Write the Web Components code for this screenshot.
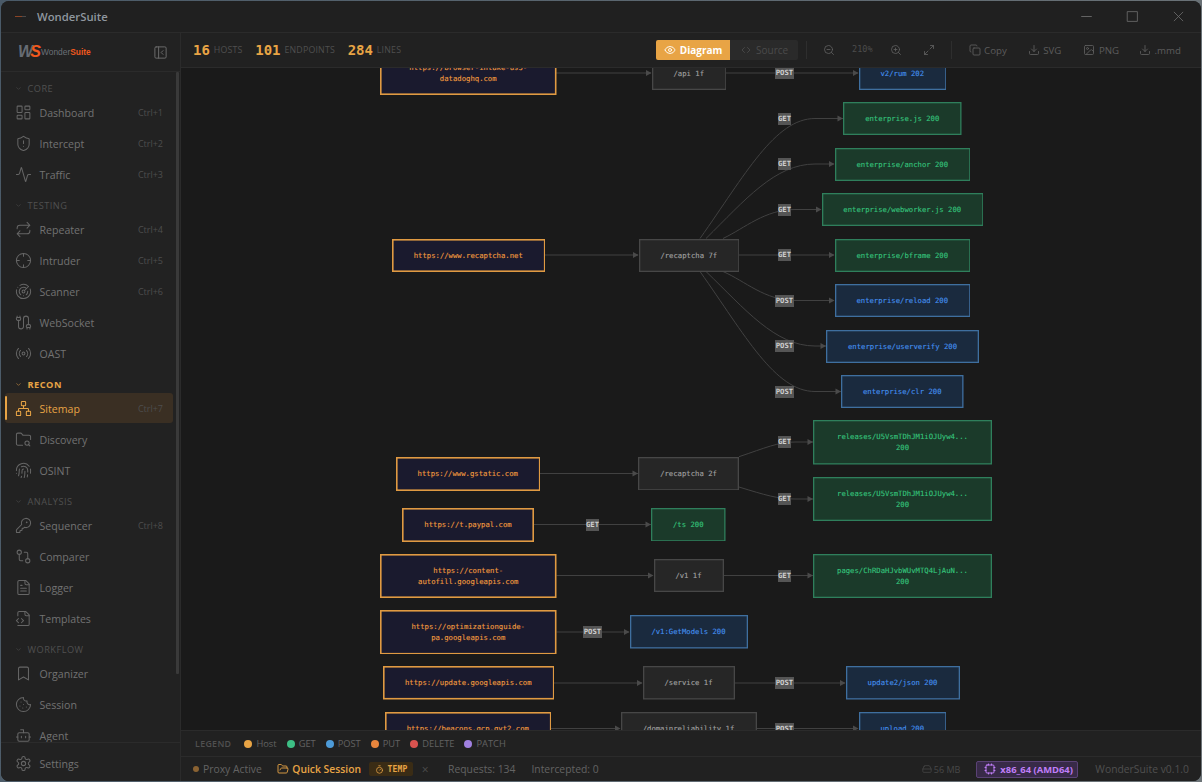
<!DOCTYPE html>
<html lang="en"><head><meta charset="utf-8"><title>WonderSuite</title>
<style>
html,body{margin:0;height:100%;overflow:hidden}
body{background:linear-gradient(100deg,#4a5a68,#6d7478);font-family:"Open Sans","Noto Sans",sans-serif;padding:1px 1px 1px 1px;box-sizing:border-box;height:782px;width:1202px}
</style></head><body>
<ws-app></ws-app>
<script>
const ICONS={
dashboard:'<rect x="3" y="3" width="7" height="9" rx="1"/><rect x="14" y="3" width="7" height="5" rx="1"/><rect x="14" y="12" width="7" height="9" rx="1"/><rect x="3" y="16" width="7" height="5" rx="1"/>',
shield:'<path d="M20 13c0 5-3.5 7.5-7.66 8.95a1 1 0 0 1-.67-.01C7.5 20.5 4 18 4 13V6a1 1 0 0 1 1-1c2 0 4.5-1.2 6.24-2.72a1.17 1.17 0 0 1 1.52 0C14.51 3.81 17 5 19 5a1 1 0 0 1 1 1z"/><path d="M12 8v4M12 16h.01"/>',
activity:'<path d="M22 12h-2.48a2 2 0 0 0-1.93 1.46l-2.35 8.36a.25.25 0 0 1-.48 0L9.24 2.18a.25.25 0 0 0-.48 0l-2.35 8.36A2 2 0 0 1 4.49 12H2"/>',
repeat:'<path d="m17 2 4 4-4 4M3 11v-1a4 4 0 0 1 4-4h14M7 22l-4-4 4-4M21 13v1a4 4 0 0 1-4 4H3"/>',
crosshair:'<circle cx="12" cy="12" r="10"/><path d="M22 12h-4M6 12H2M12 6V2M12 22v-4"/>',
radar:'<path d="M19.07 4.93A10 10 0 0 0 6.99 3.34M4 6h.01M2.29 9.62A10 10 0 1 0 21.31 8.35M16.24 7.76A6 6 0 1 0 8.23 16.67M12 18h.01M17.99 11.66A6 6 0 0 1 15.77 16.67"/><circle cx="12" cy="12" r="2"/><path d="m13.41 10.59 5.66-5.66"/>',
cable:'<path d="M17 21v-2a1 1 0 0 1-1-1v-1a2 2 0 0 1 2-2h2a2 2 0 0 1 2 2v1a1 1 0 0 1-1 1M19 15V6.5a1 1 0 0 0-7 0v11a1 1 0 0 1-7 0V9M21 21v-2h-4M3 5h4V3M7 5a1 1 0 0 1 1 1v1a2 2 0 0 1-2 2H4a2 2 0 0 1-2-2V6a1 1 0 0 1 1-1V3"/>',
radio:'<path d="M4.9 19.1C1 15.2 1 8.8 4.9 4.9M7.8 16.2c-2.3-2.3-2.3-6.1 0-8.5M16.2 7.8c2.3 2.3 2.3 6.1 0 8.5M19.1 4.9C23 8.8 23 15.1 19.1 19"/><circle cx="12" cy="12" r="2"/>',
network:'<rect x="16" y="16" width="6" height="6" rx="1"/><rect x="2" y="16" width="6" height="6" rx="1"/><rect x="9" y="2" width="6" height="6" rx="1"/><path d="M5 16v-3a1 1 0 0 1 1-1h12a1 1 0 0 1 1 1v3M12 12V8"/>',
foldersearch:'<path d="M10.7 20H4a2 2 0 0 1-2-2V5a2 2 0 0 1 2-2h3.9a2 2 0 0 1 1.69.9l.81 1.2a2 2 0 0 0 1.67.9H20a2 2 0 0 1 2 2v4.1M21 21l-1.9-1.9"/><circle cx="17" cy="17" r="3"/>',
fingerprint:'<path d="M12 10a2 2 0 0 0-2 2c0 1.02-.1 2.51-.26 4M14 13.12c0 2.38 0 6.38-1 8.88M17.29 21.02c.12-.6.43-2.3.5-3.02M2 12a10 10 0 0 1 18-6M2 16h.01M21.8 16c.2-2 .131-5.354 0-6M5 19.5C5.5 18 6 15 6 12a6 6 0 0 1 .34-2M8.65 22c.21-.66.45-1.32.57-2M9 6.8a6 6 0 0 1 9 5.2v2"/>',
key:'<path d="M2.586 17.414A2 2 0 0 0 2 18.828V21a1 1 0 0 0 1 1h3a1 1 0 0 0 1-1v-1a1 1 0 0 1 1-1h1a1 1 0 0 0 1-1v-1a1 1 0 0 1 1-1h.172a2 2 0 0 0 1.414-.586l.814-.814a6.5 6.5 0 1 0-4-4z"/><circle cx="16.5" cy="7.5" r=".5"/>',
compare:'<circle cx="18" cy="18" r="3"/><circle cx="6" cy="6" r="3"/><path d="M13 6h3a2 2 0 0 1 2 2v7M11 18H8a2 2 0 0 1-2-2V9"/>',
filetext:'<path d="M15 2H6a2 2 0 0 0-2 2v16a2 2 0 0 0 2 2h12a2 2 0 0 0 2-2V7Z"/><path d="M14 2v4a2 2 0 0 0 2 2h4M10 9H8M16 13H8M16 17H8"/>',
filecode:'<path d="M4 22h14a2 2 0 0 0 2-2V7l-5-5H6a2 2 0 0 0-2 2v4"/><path d="M14 2v4a2 2 0 0 0 2 2h4M5 12l-3 3 3 3M9 18l3-3-3-3"/>',
bookmark:'<path d="m19 21-7-4-7 4V5a2 2 0 0 1 2-2h10a2 2 0 0 1 2 2v16z"/>',
cookie:'<path d="M12 2a10 10 0 1 0 10 10 4 4 0 0 1-5-5 4 4 0 0 1-5-5M8.5 8.5v.01M16 15.5v.01M12 12v.01M11 17v.01M7 14v.01"/>',
bot:'<path d="M12 8V4H8"/><rect x="4" y="8" width="16" height="12" rx="2"/><path d="M2 14h2M20 14h2M15 13v2M9 13v2"/>',
settings:'<path d="M12.22 2h-.44a2 2 0 0 0-2 2v.18a2 2 0 0 1-1 1.73l-.43.25a2 2 0 0 1-2 0l-.15-.08a2 2 0 0 0-2.73.73l-.22.38a2 2 0 0 0 .73 2.73l.15.1a2 2 0 0 1 1 1.72v.51a2 2 0 0 1-1 1.74l-.15.09a2 2 0 0 0-.73 2.73l.22.38a2 2 0 0 0 2.73.73l.15-.08a2 2 0 0 1 2 0l.43.25a2 2 0 0 1 1 1.73V20a2 2 0 0 0 2 2h.44a2 2 0 0 0 2-2v-.18a2 2 0 0 1 1-1.73l.43-.25a2 2 0 0 1 2 0l.15.08a2 2 0 0 0 2.73-.73l.22-.39a2 2 0 0 0-.73-2.73l-.15-.08a2 2 0 0 1-1-1.74v-.5a2 2 0 0 1 1-1.74l.15-.09a2 2 0 0 0 .73-2.73l-.22-.38a2 2 0 0 0-2.73-.73l-.15.08a2 2 0 0 1-2 0l-.43-.25a2 2 0 0 1-1-1.73V4a2 2 0 0 0-2-2z"/><circle cx="12" cy="12" r="3"/>',
panel:'<rect x="3" y="3" width="18" height="18" rx="2"/><path d="M9 3v18M16 15l-3-3 3-3"/>',
eye:'<path d="M2.062 12.348a1 1 0 0 1 0-.696 10.75 10.75 0 0 1 19.876 0 1 1 0 0 1 0 .696 10.75 10.75 0 0 1-19.876 0"/><circle cx="12" cy="12" r="3"/>',
code:'<path d="m9 7-5 5 5 5M15 7l5 5-5 5"/>',
zoomout:'<circle cx="11" cy="11" r="8"/><path d="m21 21-4.3-4.3M8 11h6"/>',
zoomin:'<circle cx="11" cy="11" r="8"/><path d="m21 21-4.3-4.3M8 11h6M11 8v6"/>',
expand:'<path d="M15 3h6v6M9 21H3v-6M21 3l-7 7M3 21l7-7"/>',
copy:'<rect x="8" y="8" width="14" height="14" rx="2"/><path d="M4 16c-1.1 0-2-.9-2-2V4c0-1.1.9-2 2-2h10c1.1 0 2 .9 2 2"/>',
download:'<path d="M21 15v4a2 2 0 0 1-2 2H5a2 2 0 0 1-2-2v-4M7 10l5 5 5-5M12 15V3"/>',
image:'<rect x="3" y="3" width="18" height="18" rx="2"/><circle cx="9" cy="9" r="2"/><path d="m21 15-3.086-3.086a2 2 0 0 0-2.828 0L6 21"/>',
folderopen:'<path d="m6 14 1.5-2.9A2 2 0 0 1 9.24 10H20a2 2 0 0 1 1.94 2.5l-1.54 6a2 2 0 0 1-1.95 1.5H4a2 2 0 0 1-2-2V5a2 2 0 0 1 2-2h3.9a2 2 0 0 1 1.69.9l.81 1.2a2 2 0 0 0 1.67.9H18a2 2 0 0 1 2 2v2"/>',
timer:'<path d="M10 2h4M12 14l3-3"/><circle cx="12" cy="14" r="8"/>',
drive:'<path d="M22 12H2M5.45 5.11 2 12v6a2 2 0 0 0 2 2h16a2 2 0 0 0 2-2v-6l-3.45-6.89A2 2 0 0 0 16.76 4H7.24a2 2 0 0 0-1.79 1.11z"/>',
cpu:'<rect x="4" y="4" width="16" height="16" rx="2"/><path d="M15 2v2M15 20v2M2 15h2M2 9h2M20 15h2M20 9h2M9 2v2M9 20v2"/>',
chev:'<path d="m6 9 6 6 6-6"/>',
minus:'<path d="M3 12h18"/>',square:'<rect x="3" y="3" width="18" height="18"/>',x:'<path d="M4 4l16 16M20 4 4 20"/>'
};
class WsIcon extends HTMLElement{connectedCallback(){
  const s=this.getAttribute('size')||16,w=this.getAttribute('sw')||1.6;
  this.attachShadow({mode:'open'}).innerHTML=`<style>:host{display:inline-flex;flex:none;width:${s}px;height:${s}px}svg{display:block;width:100%;height:100%;fill:none;stroke:currentColor;stroke-width:${w};stroke-linecap:round;stroke-linejoin:round}</style><svg viewBox="0 0 24 24">${ICONS[this.getAttribute('name')]}</svg>`;
}}
customElements.define('ws-icon',WsIcon);

class WsApp extends HTMLElement{connectedCallback(){
  this.attachShadow({mode:'open'}).innerHTML=`<style>
  :host{display:flex;flex-direction:column;width:1200px;height:780px;border-radius:8px;overflow:hidden;background:#212121}
  .row{flex:1;display:flex;min-height:0}
  .main{flex:1;display:flex;flex-direction:column;min-width:0}
  </style><ws-titlebar></ws-titlebar><div class="row"><ws-sidebar></ws-sidebar><div class="main"><ws-toolbar></ws-toolbar><ws-diagram></ws-diagram><ws-legend></ws-legend><ws-statusbar></ws-statusbar></div></div>`;
}}
class WsTitlebar extends HTMLElement{connectedCallback(){
  this.attachShadow({mode:'open'}).innerHTML=`<style>
  :host{display:flex;align-items:center;height:32px;flex:none;box-sizing:border-box;border-bottom:1px solid #2b2b2b;background:#202020;color:#8f979f;font:600 11.3px "Open Sans",sans-serif}
  .mark{width:11px;height:1.5px;margin-left:14px;background:linear-gradient(90deg,#8a4426 0 60%,#4a4a4a 60%)}
  .t{margin-left:11px}
  .c{margin-left:auto;display:flex;color:#6e6e6e}
  .c span{display:flex;width:46px;justify-content:center}
  </style><div class="mark"></div><div class="t">WonderSuite</div><div class="c"><span><ws-icon name="minus" size="13" sw="1.6"></ws-icon></span><span><ws-icon name="square" size="13" sw="1.5"></ws-icon></span><span><ws-icon name="x" size="13" sw="1.5"></ws-icon></span></div>`;
}}
class WsNavSection extends HTMLElement{connectedCallback(){
  const a=this.hasAttribute('active');
  this.attachShadow({mode:'open'}).innerHTML=`<style>
  :host{display:flex;align-items:center;height:24px;padding:6px 0 0 14px;box-sizing:border-box;color:${a?'#e8a445':'#505050'};font:${a?700:400} 9.2px "Open Sans",sans-serif;letter-spacing:.5px}
  ws-icon{margin-right:5.5px;color:${a?'#a5763a':'#444'}}
  </style><ws-icon name="chev" size="7" sw="2.6"></ws-icon><slot></slot>`;
}}
class WsNavItem extends HTMLElement{connectedCallback(){
  const a=this.hasAttribute('active'),k=this.getAttribute('keys')||'';
  this.attachShadow({mode:'open'}).innerHTML=`<style>
  :host{display:flex;align-items:center;height:30px;margin:0 7px 1px 4px;padding:0 10px 0 9.5px;box-sizing:border-box;border-radius:3px;position:relative;color:${a?'#e8a445':'#727272'};font:10.6px "Open Sans",sans-serif;${a?'background:#3a2f23;':''}}
  ws-icon{margin-right:8px;color:${a?'#e8a445':'#666'}}
  .t{padding-top:2px}
  .k{margin-left:auto;font-size:9px;color:#4d4d4d;padding-top:1px}
  ${a?':host::before{content:"";position:absolute;left:0;top:3px;bottom:3px;width:2px;background:#e8a445;border-radius:1px}':''}
  </style><ws-icon name="${this.getAttribute('icon')}" size="17" sw="1.45"></ws-icon><span class="t"><slot></slot></span>${k?`<span class="k">${k}</span>`:''}`;
}}
class WsSidebar extends HTMLElement{connectedCallback(){
  const sec=(n,a)=>`<ws-nav-section ${a?'active':''}>${n}</ws-nav-section>`;
  const it=(n,i,k,a)=>`<ws-nav-item icon="${i}" keys="${k||''}" ${a?'active':''}>${n}</ws-nav-item>`;
  this.attachShadow({mode:'open'}).innerHTML=`<style>
  :host{display:flex;flex-direction:column;flex:none;width:180px;box-sizing:border-box;background:#222;border-right:1px solid #2b2b2b;position:relative}
  .logo{flex:none;height:39px;display:flex;align-items:center;box-sizing:border-box;border-bottom:1px solid #2b2b2b;padding:0 12px 0 17px;color:#666}
  .ws{font:italic 900 16px/1 "Liberation Sans",sans-serif;letter-spacing:-2.8px;color:#666c74;width:23px}
  .ws b{color:#f0581e}
  .name{font:400 8.4px "Liberation Sans",sans-serif;color:#6a7078}
  .name b{color:#f0581e;font-weight:700}
  .logo ws-icon{margin-left:auto;color:#6a6a6a}
  nav{flex:1;min-height:0;overflow:hidden;padding-top:1px}
  .thumb{position:absolute;right:1px;top:39px;width:3px;height:602px;background:#3a3a3a;border-radius:1px}
  .foot{flex:none;height:39px;border-top:1px solid #2b2b2b;display:flex;align-items:flex-start;box-sizing:border-box;padding-top:5px;background:#222}
  .foot ws-nav-item{flex:1}
  </style><div class="logo"><span class="ws">W<b>S</b></span><span class="name">Wonder<b>Suite</b></span><ws-icon name="panel" size="15" sw="1.6"></ws-icon></div>
  <nav>${sec('CORE')}${it('Dashboard','dashboard','Ctrl+1')}${it('Intercept','shield','Ctrl+2')}${it('Traffic','activity','Ctrl+3')}
  ${sec('TESTING')}${it('Repeater','repeat','Ctrl+4')}${it('Intruder','crosshair','Ctrl+5')}${it('Scanner','radar','Ctrl+6')}${it('WebSocket','cable')}${it('OAST','radio')}
  ${sec('RECON',1)}${it('Sitemap','network','Ctrl+7',1)}${it('Discovery','foldersearch')}${it('OSINT','fingerprint')}
  ${sec('ANALYSIS')}${it('Sequencer','key','Ctrl+8')}${it('Comparer','compare')}${it('Logger','filetext')}${it('Templates','filecode')}
  ${sec('WORKFLOW')}${it('Organizer','bookmark')}${it('Session','cookie')}${it('Agent','bot')}</nav>
  <div class="thumb"></div><div class="foot">${it('Settings','settings')}</div>`;
}}
class WsTool extends HTMLElement{connectedCallback(){
  this.attachShadow({mode:'open'}).innerHTML=`<style>
  :host{display:inline-flex;align-items:center;gap:3.5px;color:#5c5c5c;font:9.7px "Open Sans",sans-serif}
  ws-icon{color:#5f5f5f}
  </style><ws-icon name="${this.getAttribute('icon')}" size="${this.getAttribute('size')||12}" sw="1.7"></ws-icon><slot></slot>`;
}}
class WsToolbar extends HTMLElement{connectedCallback(){
  const st=(n,l)=>`<span class="st"><b>${n}</b><i>${l}</i></span>`;
  this.attachShadow({mode:'open'}).innerHTML=`<style>
  :host{display:flex;align-items:center;flex:none;height:35px;box-sizing:border-box;border-bottom:1px solid #2b2b2b;background:#212121;padding:0 0 0 12px;font-family:"Open Sans",sans-serif}
  .st{display:flex;align-items:center;margin-right:12.7px}
  .st b{font:700 14px "DejaVu Sans Mono",monospace;color:#e8a445;letter-spacing:-.05px}
  .st i{font:normal 8.8px "Open Sans",sans-serif;color:#4f4f4f;margin-left:4px;letter-spacing:.2px}
  .seg{margin-left:auto;display:flex;height:20px;border-radius:2px;overflow:hidden;background:#2a2a2a}
  .seg span{display:flex;align-items:center;justify-content:center;gap:4px;font-size:10px}
  .on{width:74px;background:#e8a445;color:#fff;font-weight:700}
  .off{width:68px;color:#4a4a4a}
  .div{width:1px;height:18px;background:#2e2e2e}
  .z{font:8.5px "DejaVu Sans Mono",monospace;color:#4c4c4c;margin:0 0 2px 0}
  .tools{display:flex;align-items:center}
  </style>${st(16,'HOSTS')}${st(101,'ENDPOINTS')}${st(284,'LINES')}
  <div class="seg"><span class="on"><ws-icon name="eye" size="12" sw="1.8"></ws-icon>Diagram</span><span class="off"><ws-icon name="code" size="12" sw="1.8"></ws-icon>Source</span></div>
  <div class="tools">
  <div class="div" style="margin-left:8px"></div>
  <ws-tool icon="zoomout" size="12" style="margin-left:16px"></ws-tool>
  <span class="z" style="margin-left:17px">210%</span>
  <ws-tool icon="zoomin" size="12" style="margin-left:17px"></ws-tool>
  <ws-tool icon="expand" size="12" style="margin-left:21px"></ws-tool>
  <div class="div" style="margin-left:16px"></div>
  <ws-tool icon="copy" style="margin-left:17px">Copy</ws-tool>
  <ws-tool icon="download" style="margin-left:21px">SVG</ws-tool>
  <ws-tool icon="image" style="margin-left:22px">PNG</ws-tool>
  <ws-tool icon="download" style="margin-left:20px;margin-right:20px">.mmd</ws-tool>
  </div>`;
}}
class WsNode extends HTMLElement{connectedCallback(){
  const [x,y,w,h]=['x','y','w','h'].map(a=>+this.getAttribute(a)),k=this.getAttribute('kind');
  const C={host:['#1a1a2e','#e09a42','#f09a3e',1.6],dir:['#262626','#474747','#a0a0a0',1.3],get:['#1b3a2a','#2f7f5c','#35c47c',1.3],post:['#1a2a3e','#3f6f9f','#4490ee',1.3]}[k];
  this.attachShadow({mode:'open'}).innerHTML=`<style>
  :host{position:absolute;left:${x-181}px;top:${y-68}px;width:${w}px;height:${h}px;display:flex;align-items:center;justify-content:center;text-align:center;color:${C[2]};font:7.25px/11px "DejaVu Sans Mono",monospace;-webkit-text-stroke:.12px currentColor}
  svg{position:absolute;inset:0;width:100%;height:100%}
  rect{fill:${C[0]};stroke:${C[1]};stroke-width:${C[3]}}
  div{position:relative}
  </style><svg><rect x="${C[3]/2}" y="${C[3]/2}" width="${w-C[3]}" height="${h-C[3]}"/></svg><div><slot></slot></div>`;
}}
class WsEdgeLabel extends HTMLElement{connectedCallback(){
  const cx=+this.getAttribute('cx'),cy=+this.getAttribute('cy'),n=this.textContent.length,w=n*4.36+.8;
  this.attachShadow({mode:'open'}).innerHTML=`<style>
  :host{position:absolute;left:${cx-181-w/2}px;top:${cy-68-6}px;width:${w}px;height:12px;background:#555;color:#cfcfcf;font:700 7.25px/12px "DejaVu Sans Mono",monospace;text-align:center}
  </style><slot></slot>`;
}}
class WsDiagram extends HTMLElement{connectedCallback(){
  const N=[
  ['host',380,51,176.5,44,'https://browser-intake-us5-<br>datadoghq.com'],['dir',651.5,57,74.5,33,'/api 1f'],['post',858.5,57,87.5,33,'v2/rum 202'],
  ['host',391.5,238.5,153.5,33,'https://www.recaptcha.net'],['dir',638.5,238.5,100.5,33,'/recaptcha 7f'],
  ['get',843,102,118.5,33,'enterprise.js 200'],['get',834.5,147.5,135.5,33,'enterprise/anchor 200'],['get',821.5,193,161.5,33,'enterprise/webworker.js 200'],['get',834.5,238.5,135.5,33,'enterprise/bframe 200'],
  ['post',834.5,284,135.5,33,'enterprise/reload 200'],['post',826,329.5,153,33,'enterprise/userverify 200'],['post',841,375,122.5,33,'enterprise/clr 200'],
  ['host',395.5,456.5,144.5,34,'https://www.gstatic.com'],['dir',638,456.5,101,33.5,'/recaptcha 2f'],
  ['get',813,420,179,44.5,'releases/U5VsmTDhJM1iOJUyw4...<br>200'],['get',813,477,179,44,'releases/U5VsmTDhJM1iOJUyw4...<br>200'],
  ['host',402,507.5,132,34,'https://t.paypal.com'],['get',651,507.5,74.5,33.5,'/ts 200'],
  ['host',380,553.5,176.5,44,'https://content-<br>autofill.googleapis.com'],['dir',653.5,559,70,33,'/v1 1f'],['get',813,553.5,179,44,'pages/ChRDaHJvbWUvMTQ4LjAuN...<br>200'],
  ['host',380,609.5,176.5,44.5,'https://optimizationguide-<br>pa.googleapis.com'],['post',629.5,615,118,33.5,'/v1:GetModels 200'],
  ['host',382.5,666,171.5,33.5,'https://update.googleapis.com'],['dir',642.5,666,92,33.5,'/service 1f'],['post',845.5,666,114,33.5,'update2/json 200'],
  ['host',384.5,711.5,166.5,33.5,'https://beacons.gcp.gvt2.com'],['dir',620.5,711.5,136,33.5,'/domainreliability 1f'],['post',858.5,711.5,87.5,33.5,'upload 200']
  ];
  const E=[
  ['M556 73H651',651.5,73],['M726 73H858',858.5,73],
  ['M545 255H638',638.5,255],
  ['M700 238.5C745 175 775 118.5 815 118.5H843',843,118.5],['M706 238.5C745 200 775 164 815 164H834',834.5,164],['M723 238.5C745 228 765 209.5 795 209.5H821',821.5,209.5],['M739 255H834',834.5,255],
  ['M723 271.5C745 281 765 300.5 795 300.5H834',834.5,300.5],['M706 271.5C745 309 775 346 815 346H826',826,346],['M700 271.5C745 335 775 391.5 815 391.5H841',841,391.5],
  ['M540 473.5H638',638,473.5],['M739 456.7C765 448 778 442 795 442H813',813,442],['M739 487C765 495 778 499 795 499H813',813,499],
  ['M534 524.5H651',651,524.5],['M556.5 575.5H653',653.5,575.5],['M723.5 575.5H813',813,575.5],
  ['M556.5 632H629',629.5,632],['M554 683H642',642.5,683],['M734.5 683H845',845.5,683],
  ['M551 728.5H620',620.5,728.5],['M756.5 728.5H858',858.5,728.5]
  ];
  const L=[['POST',784.5,73],['GET',784.5,118.5],['GET',784.5,164],['GET',784.5,209.5],['GET',784.5,255],['POST',784.5,300.5],['POST',784.5,346],['POST',784.5,391.5],['GET',784.5,442],['GET',784.5,499],['GET',592.5,524.5],['GET',784.5,575.5],['POST',592.5,632],['POST',784.5,683],['POST',784.5,728.5]];
  const paths=E.map(e=>`<path d="${e[0]}"/><polygon points="${e[1]},${e[2]} ${e[1]-5.5},${e[2]-3} ${e[1]-5.5},${e[2]+3}"/>`).join('');
  this.attachShadow({mode:'open'}).innerHTML=`<style>
  :host{display:block;flex:1;min-height:0;position:relative;overflow:hidden;background:#1a1a1a}
  svg{position:absolute;left:-181px;top:-68px;width:1202px;height:782px}
  path{fill:none;stroke:#414141;stroke-width:1}
  polygon{fill:#4a4a4a}
  </style><svg>${paths}</svg>`+
  N.map(n=>`<ws-node kind="${n[0]}" x="${n[1]}" y="${n[2]}" w="${n[3]}" h="${n[4]}">${n[5]}</ws-node>`).join('')+
  L.map(l=>`<ws-edge-label cx="${l[1]}" cy="${l[2]}">${l[0]}</ws-edge-label>`).join('');
}}
class WsLegend extends HTMLElement{connectedCallback(){
  const d=(c,t)=>`<span class="d"><i style="background:${c}"></i>${t}</span>`;
  this.attachShadow({mode:'open'}).innerHTML=`<style>
  :host{display:flex;align-items:center;flex:none;height:27px;box-sizing:border-box;border-top:1px solid #2b2b2b;border-bottom:1px solid #2b2b2b;background:#212121;padding-left:14px;font:9.3px "Open Sans",sans-serif;color:#616161}
  b{font:600 8.8px "Open Sans",sans-serif;color:#505050;letter-spacing:.35px;margin-right:13px}
  .d{display:flex;align-items:center;margin-right:10px}
  i{width:8px;height:8px;border-radius:50%;margin-right:4px}
  </style><b>LEGEND</b>${d('#e8a445','Host')}${d('#3dbf85','GET')}${d('#4d9bd9','POST')}${d('#e8863d','PUT')}${d('#d9534f','DELETE')}${d('#a080e0','PATCH')}`;
}}
class WsStatusbar extends HTMLElement{connectedCallback(){
  this.attachShadow({mode:'open'}).innerHTML=`<style>
  :host{display:flex;align-items:center;flex:none;height:24px;box-sizing:border-box;background:#212121;padding-left:12px;color:#636363;font:10.35px "Open Sans",sans-serif;white-space:nowrap}
  .dot{width:6px;height:6px;border-radius:50%;background:#8a6232;margin-right:4px}
  .qs{display:flex;align-items:center;gap:3.5px;color:#e8a445;font-weight:600;margin-left:15px}
  .tmp{display:flex;align-items:center;justify-content:center;gap:4px;width:44px;height:14px;background:#3a2c15;border-radius:2px;color:#e8a445;font:700 8px "DejaVu Sans Mono",monospace;margin-left:8px;letter-spacing:.2px}
  .x{margin-left:6px;color:#4e4e4e;font-size:12px;width:12px;text-align:center}
  .mem{display:flex;align-items:center;gap:2px;margin-left:auto;color:#484848;font-size:9px}
  .arch{display:flex;align-items:center;gap:4px;height:17px;width:102px;box-sizing:border-box;padding-left:7px;background:#382a48;border:1px solid #5a4275;border-radius:2px;color:#c07ef8;font:700 9.4px "Open Sans",sans-serif;margin-left:16px}
  .v{margin:0 12px 0 17px;color:#505050}
  </style><span class="dot"></span><span>Proxy Active</span>
  <span class="qs"><ws-icon name="folderopen" size="12" sw="1.8"></ws-icon>Quick Session</span>
  <span class="tmp"><ws-icon name="timer" size="9" sw="2"></ws-icon>TEMP</span><span class="x">×</span>
  <span style="margin-left:17px">Requests: 134</span><span style="margin-left:16px">Intercepted: 0</span>
  <span class="mem"><ws-icon name="drive" size="10" sw="1.8"></ws-icon>56 MB</span>
  <span class="arch"><ws-icon name="cpu" size="12" sw="2"></ws-icon>x86_64 (AMD64)</span>
  <span class="v">WonderSuite v0.1.0</span>`;
}}
customElements.define('ws-titlebar',WsTitlebar);customElements.define('ws-nav-section',WsNavSection);customElements.define('ws-nav-item',WsNavItem);customElements.define('ws-sidebar',WsSidebar);customElements.define('ws-tool',WsTool);customElements.define('ws-toolbar',WsToolbar);customElements.define('ws-node',WsNode);customElements.define('ws-edge-label',WsEdgeLabel);customElements.define('ws-diagram',WsDiagram);customElements.define('ws-legend',WsLegend);customElements.define('ws-statusbar',WsStatusbar);customElements.define('ws-app',WsApp);
</script>
</body></html>
